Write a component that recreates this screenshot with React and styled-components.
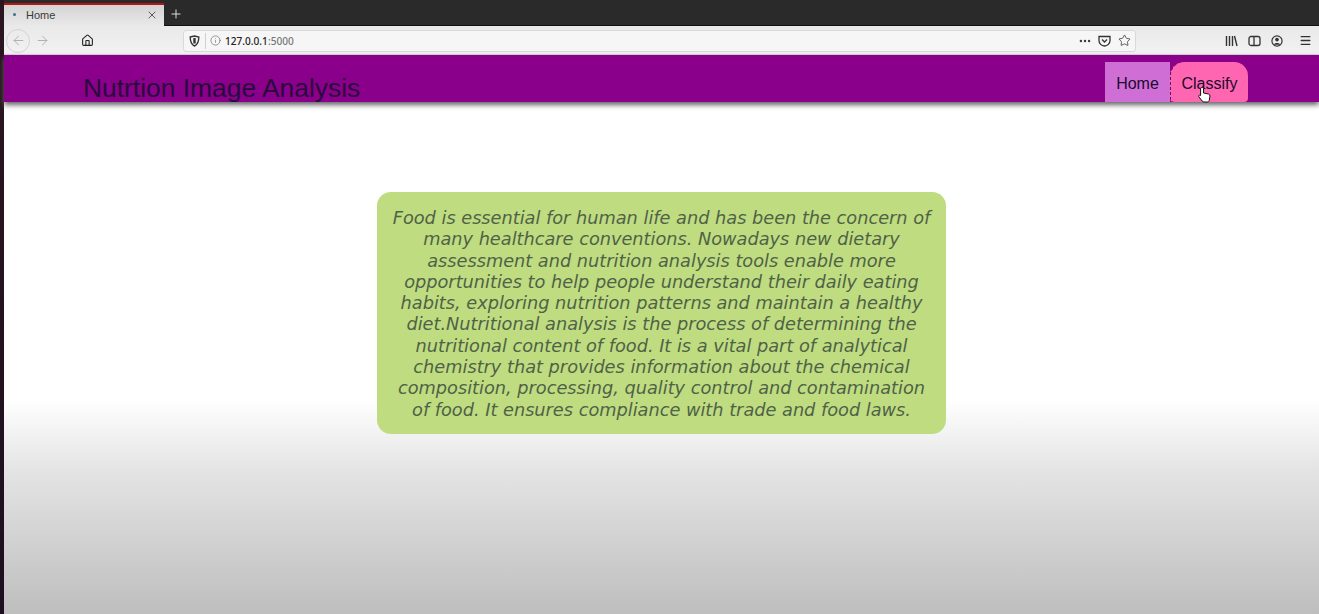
import React from "react";
import styled, { createGlobalStyle } from "styled-components";
import { ArrowLeft, ArrowRight, Home as HomeIcon, Info, MoreHorizontal, Star, Menu, X, Plus } from "lucide-react";

const Global = createGlobalStyle`
  html, body { margin: 0; padding: 0; height: 100%; overflow: hidden; }
  #root { height: 100%; }
`;
const Screen = styled.div`
  width: 1319px; height: 614px; display: flex; overflow: hidden;
  font-family: "Liberation Sans", Arial, sans-serif; background: #fff;
`;
const Edge = styled.div`
  width: 4px; flex: none;
  background: linear-gradient(#2a1520 0, #2a1520 100px, #1e0f20 100%);
`;
const Main = styled.div`
  flex: 1; min-width: 0; display: flex; flex-direction: column;
`;
const TabBar = styled.div`
  height: 26px; flex: none; display: flex; align-items: stretch;
  background: #2b2a2b; padding-top: 3px; box-sizing: border-box; border-bottom: 1px solid #111;
`;
const Tab = styled.div`
  width: 160px; display: flex; align-items: center; box-sizing: border-box;
  margin-bottom: -1px; padding: 0 6px 2px 9px;
  background: linear-gradient(#d4d4d4, #e9e9e9); border-top: 2px solid #b01818;
  font-size: 11px; color: #3a3a3a;
`;
const TabDot = styled.span`
  width: 3px; height: 3px; border-radius: 50%; background: #3c6d92; margin-right: 10px;
`;
const TabTitle = styled.span`flex: 1;`;
const NewTab = styled.div`
  width: 24px; display: flex; align-items: center; justify-content: center; color: #e8e8e8;
`;
const Toolbar = styled.div`
  height: 29px; flex: none; display: flex; align-items: center; position: relative; box-sizing: border-box;
  background: linear-gradient(#e9e9e9, #f2f2f2); padding: 1px 0 0 2px; border-bottom: 1px solid #d8d8d8;
`;
const NavCircle = styled.div`
  width: 24px; height: 24px; border-radius: 50%; border: 1px solid #d4d4d4; box-sizing: border-box;
  display: flex; align-items: center; justify-content: center; color: #a8a8a8;
`;
const NavPlain = styled.div`
  width: 24px; margin-left: ${p => p.$ml || 0}px; display: flex; justify-content: center; color: ${p => p.$c || "#a8a8a8"};
`;
const UrlBar = styled.div`
  width: 953px; height: 22px; margin-left: 84px; display: flex; align-items: center; box-sizing: border-box;
  background: #f6f6f6; border: 1px solid #d9d9d9; border-radius: 3px; padding: 0 4px 0 5px; color: #3c3c3c;
`;
const Divider = styled.span`width: 1px; height: 16px; background: #d0d0d0; margin: 0 4px 0 5px;`;
const Url = styled.span`
  flex: 1; margin-left: 4px; font: 500 10.1px "Noto Sans", sans-serif; color: #222;
`;
const Port = styled.span`color: #777;`;
const UrlIcon = styled.span`display: flex; margin-left: ${p => p.$ml || 0}px;`;
const ToolIcons = styled.div`
  display: flex; align-items: center; margin-left: 84px; color: #333;
`;
const ToolIcon = styled.span`
  display: flex; width: ${p => p.$w || 23}px; justify-content: center; margin-left: ${p => p.$ml || 0}px;
`;
const TopNav = styled.header`
  height: 47px; flex: none; background: #8b008b; display: flex; position: relative; z-index: 1;
  align-items: flex-end; padding-left: 79px; box-shadow: 0 3px 5px #666669;
`;
const Title = styled.h1`
  margin: 0 0 -1px; font-weight: 400; font-size: 26.4px; line-height: 29px; color: #2a0a3c; flex: 1;
`;
const Links = styled.nav`
  display: flex; align-items: stretch; height: 40px; margin-right: 71px;
`;
const NavLink = styled.a`
  display: flex; align-items: center; justify-content: center; box-sizing: border-box; height: 40px;
  width: ${p => p.$w}px; font-size: 16px; color: #20082e; padding-top: 3px;
  background: ${p => p.$active ? "#ff66b2" : "#cf6fd6"};
  border-radius: ${p => p.$active ? "14px 14px 4px 4px" : "0"};
  border-left: ${p => p.$active ? "1px dashed #6a1060" : "none"};
`;
const Cursor = styled.svg`
  position: absolute; left: 1197px; top: 86px; z-index: 2;
`;
const Body = styled.main`
  flex: 1; display: flex; justify-content: center; align-items: flex-start; padding-top: 90px;
  background: linear-gradient(#fff 0, #fff 298px, #e4e4e4 368px, #bebebe 100%);
`;
const Card = styled.section`
  width: 569px; height: 242px; box-sizing: border-box; background: #bfdc80; border-radius: 14px;
  padding: 16px 12px 0; text-align: center;
  font: italic 17.73px/21.3px "DejaVu Sans", sans-serif; color: #4f6247;
`;

export default function App() {
  return (
    <Screen>
      <Global />
      <Edge />
      <Main>
        <TabBar>
          <Tab>
            <TabDot />
            <TabTitle>Home</TabTitle>
            <X size={12} strokeWidth={1.6} />
          </Tab>
          <NewTab><Plus size={14} strokeWidth={1.6} /></NewTab>
        </TabBar>
        <Toolbar>
          <NavCircle><ArrowLeft size={15} strokeWidth={1.4} /></NavCircle>
          <NavPlain><ArrowRight size={15} strokeWidth={1.4} /></NavPlain>
          <NavPlain $ml={21} $c="#222"><HomeIcon size={13} strokeWidth={2} /></NavPlain>
          <UrlBar>
            <UrlIcon>
              <svg width="11" height="12" viewBox="0 0 11 12" fill="none" stroke="#333" strokeWidth="1.4">
                <path d="M1.2 2 5.5 1l4.3 1c0 4-.8 7.4-4.3 9C2 9.4 1.2 6 1.2 2Z" />
                <path d="M5.5 3v5.5" strokeWidth="2.4" />
              </svg>
            </UrlIcon>
            <Divider />
            <UrlIcon><Info size={11} strokeWidth={1.4} color="#666" /></UrlIcon>
            <Url>127.0.0.1<Port>:5000</Port></Url>
            <UrlIcon><MoreHorizontal size={14} strokeWidth={2.2} /></UrlIcon>
            <UrlIcon $ml={6}>
              <svg width="13" height="12" viewBox="0 0 13 12" fill="none" stroke="#333" strokeWidth="1.3">
                <path d="M1 1.5h11v4a5.5 5.5 0 0 1-11 0z" />
                <path d="m4 4.5 2.5 2.5L9 4.5" />
              </svg>
            </UrlIcon>
            <UrlIcon $ml={7}><Star size={13} strokeWidth={1.5} /></UrlIcon>
          </UrlBar>
          <ToolIcons>
            <ToolIcon>
              <svg width="13" height="12" viewBox="0 0 13 12" fill="none" stroke="#333" strokeWidth="1.4">
                <path d="M1.5 1v10M4.5 1v10M7.5 1v10M9.5 1l2.5 10" />
              </svg>
            </ToolIcon>
            <ToolIcon>
              <svg width="13" height="12" viewBox="0 0 13 12" fill="none" stroke="#333" strokeWidth="1.3">
                <rect x="1" y="1.5" width="11" height="9" rx="2" />
                <path d="M6 1.5v9" />
              </svg>
            </ToolIcon>
            <ToolIcon $w={22}>
              <svg width="12" height="12" viewBox="0 0 13 13">
                <circle cx="6.5" cy="6.5" r="5.5" fill="none" stroke="#333" strokeWidth="1.3" />
                <circle cx="6.5" cy="5" r="2" fill="#333" />
                <path d="M2.8 10.5c1-2.500 6.4-2.500 7.4 0" fill="#333" />
              </svg>
            </ToolIcon>
            <ToolIcon $ml={6}><Menu size={13} strokeWidth={2.4} /></ToolIcon>
          </ToolIcons>
        </Toolbar>
        <TopNav>
          <Title>Nutrtion Image Analysis</Title>
          <Links>
            <NavLink $w={65}>Home</NavLink>
            <NavLink $w={78} $active>Classify</NavLink>
          </Links>
        </TopNav>
        <Body>
          <Card>
            Food is essential for human life and has been the concern of many healthcare conventions. Nowadays new dietary assessment and nutrition analysis tools enable more opportunities to help people understand their daily eating habits, exploring nutrition patterns and maintain a healthy diet.Nutritional analysis is the process of determining the nutritional content of food. It is a vital part of analytical chemistry that provides information about the chemical composition, processing, quality control and contamination of food. It ensures compliance with trade and food laws.
          </Card>
        </Body>
      </Main>
      <Cursor width="16" height="18" viewBox="0 0 16 18">
        <path d="M5 1.5c1 0 1.5.6 1.5 1.500v4l5 1c1 .3 1.5 1 1.5 2l-.8 4.500c-.2 1-1 1.500-2 1.500H7c-.8 0-1.3-.4-1.800-1L2 11c-.6-1-.2-2 1-2l.6.5V3c0-1 .5-1.500 1.400-1.500z" fill="#fff" stroke="#111" strokeWidth="1" />
      </Cursor>
    </Screen>
  );
}
